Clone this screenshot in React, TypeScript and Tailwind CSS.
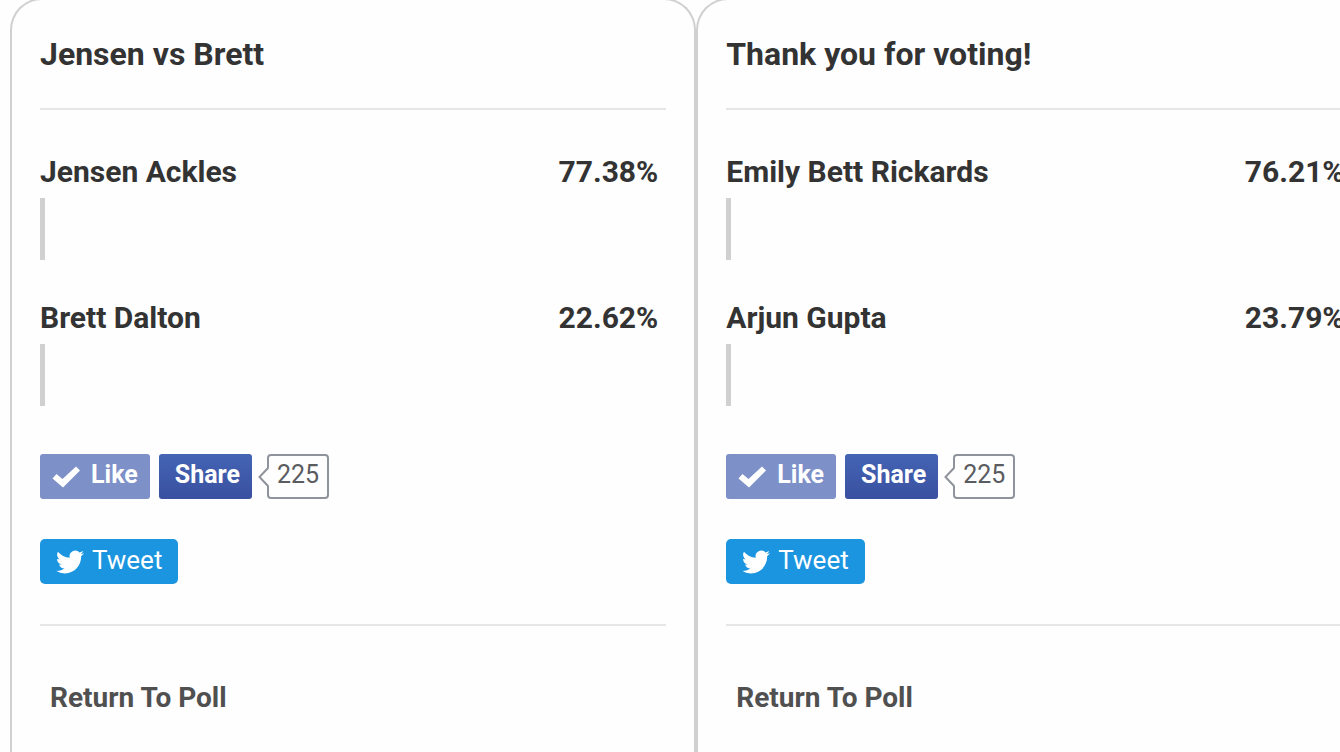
import React from "react";

type Option = { name: string; percent: string };
type Poll = { title: string; options: Option[]; likes: number };

const polls: Poll[] = [
  {
    title: "Jensen vs Brett",
    options: [
      { name: "Jensen Ackles", percent: "77.38%" },
      { name: "Brett Dalton", percent: "22.62%" },
    ],
    likes: 225,
  },
  {
    title: "Thank you for voting!",
    options: [
      { name: "Emily Bett Rickards", percent: "76.21%" },
      { name: "Arjun Gupta", percent: "23.79%" },
    ],
    likes: 225,
  },
];

function CheckIcon() {
  return (
    <svg viewBox="0 0 28 22" className="h-[22px] w-7 shrink-0" aria-hidden="true">
      <path d="M0.5 12.5 L4.5 8 L10.5 13 L24 0.5 L28 4.5 L11 21.5 Z" fill="#fff" />
    </svg>
  );
}

function BirdIcon() {
  return (
    <svg viewBox="0 0 24 20" className="h-6 w-7 shrink-0" aria-hidden="true">
      <path
        d="M23.95 2.57a10 10 0 0 1-2.82.77 4.96 4.96 0 0 0 2.16-2.72c-.95.56-2 .96-3.12 1.18a4.92 4.92 0 0 0-8.38 4.49C7.69 6.1 4.07 4.13 1.64 1.16a4.9 4.9 0 0 0-.67 2.48c0 1.71.87 3.21 2.19 4.1a4.9 4.9 0 0 1-2.23-.62v.06a4.92 4.92 0 0 0 3.95 4.83 5 5 0 0 1-2.21.08 4.94 4.94 0 0 0 4.6 3.42A9.87 9.87 0 0 1 0 17.54a14 14 0 0 0 7.55 2.21c9.05 0 14-7.5 14-13.98 0-.21 0-.42-.02-.63a9.94 9.94 0 0 0 2.46-2.55z"
        fill="#fff"
      />
    </svg>
  );
}

function LikeCount({ count }: { count: number }) {
  return (
    <div className="flex items-center">
      <svg viewBox="0 0 11 20" className="relative z-10 -mr-[2px] h-5 w-[11px]" aria-hidden="true">
        <path d="M11 1 L2 10 L11 19 Z" fill="#fefefe" />
        <path d="M10 1 L1.5 10 L10 19" fill="none" stroke="#8f939b" strokeWidth="2" />
      </svg>
      <span className="flex h-[45px] items-center rounded-[4px] border-2 border-[#8f939b] px-2 pb-1 text-[25px] leading-8 text-[#5a5c60]">
        {count}
      </span>
    </div>
  );
}

function PollCard({ poll }: { poll: Poll }) {
  return (
    <section className="w-[51.6%] shrink-0 rounded-t-[32px] border-x-2 border-t-2 border-[#d0d0d0] px-7 pt-9 pb-9">
      <h2 className="border-b-2 border-[#e6e6e6] pb-9 text-[32px] leading-9 font-bold text-[#333]">
        {poll.title}
      </h2>
      <ul className="flex flex-col gap-10 pt-11">
        {poll.options.map((o) => (
          <li key={o.name}>
            <div className="flex justify-between pr-2 text-[30px] leading-9 font-bold text-[#333]">
              <span>{o.name}</span>
              <span>{o.percent}</span>
            </div>
            <div className="mt-2 h-[62px] w-[5px] bg-[#d0d0d0]" />
          </li>
        ))}
      </ul>
      <div className="mt-12 flex items-center">
        <button
          type="button"
          className="mr-[9px] flex h-[45px] items-center gap-[11px] rounded-[3px] bg-[#7d90c8] px-3 pb-1 text-[25px] leading-8 font-bold text-white"
        >
          <span className="pt-1">
            <CheckIcon />
          </span>
          Like
        </button>
        <button
          type="button"
          className="mr-[6px] flex h-[45px] items-center rounded-[3px] bg-linear-to-b from-[#4464b4] to-[#3a50a0] pr-3 pb-1 pl-4 text-[25px] leading-8 font-bold text-white"
        >
          Share
        </button>
        <LikeCount count={poll.likes} />
      </div>
      <button
        type="button"
        className="mt-10 flex h-[45px] items-center gap-2 rounded-[5px] bg-[#1b95e0] px-4 pb-1 text-[26px] leading-8 text-white"
      >
        <span className="pt-1">
          <BirdIcon />
        </span>
        Tweet
      </button>
      <div className="mt-10 border-t-2 border-[#e6e6e6] px-[10px] pt-[54px]">
        <a href="#poll" className="text-[28px] leading-9 font-bold text-[#505050]">
          Return To Poll
        </a>
      </div>
    </section>
  );
}

export default function App() {
  return (
    <div className="min-h-screen overflow-hidden bg-[#fefefe] font-['Roboto',sans-serif]">
      <main className="-mt-[2px] flex min-h-[calc(100vh+2px)] pl-[10px]">
        {polls.map((p) => (
          <PollCard key={p.title} poll={p} />
        ))}
      </main>
    </div>
  );
}
